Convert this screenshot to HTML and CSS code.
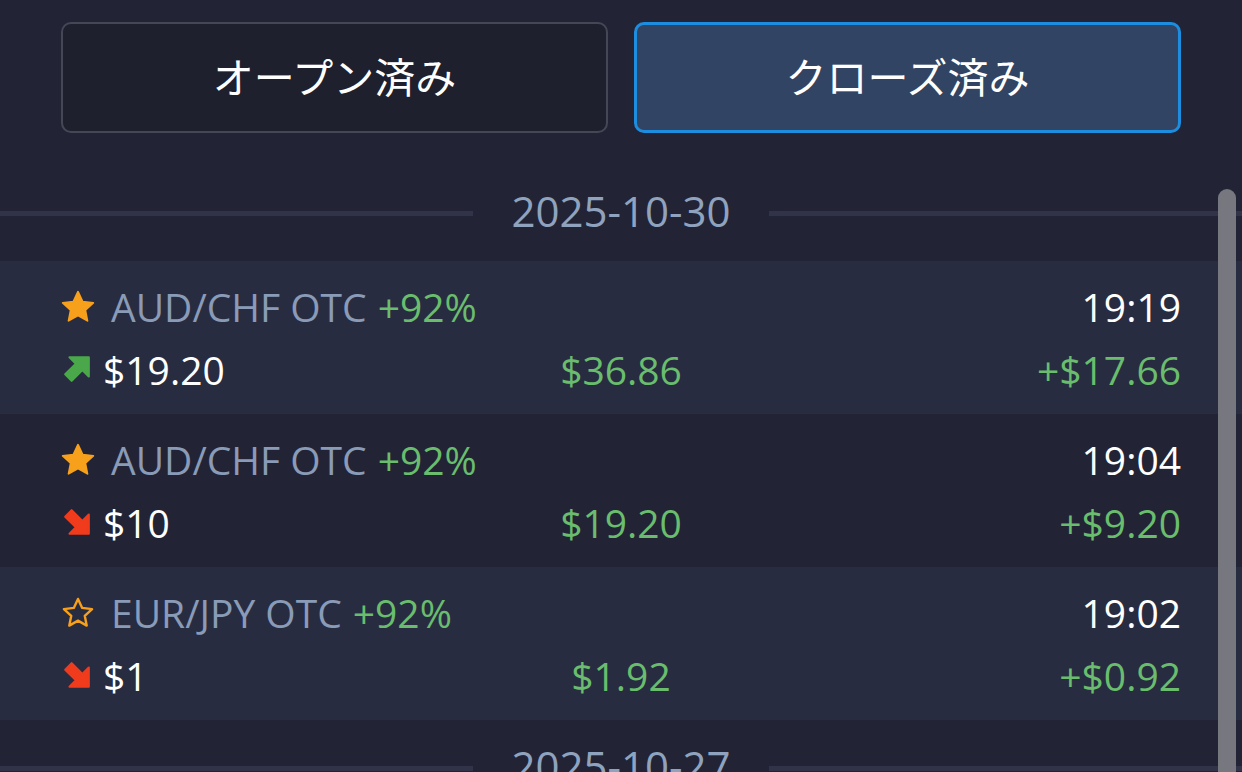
FILE: index.html
```html
<!DOCTYPE html>
<html lang="ja">
<head>
<meta charset="utf-8">
<title>取引履歴</title>
<link rel="stylesheet" href="styles.css">
</head>
<body>
<div class="app">
  <div class="tabs">
    <button class="tab"><span class="tab-label">オープン済み</span></button>
    <button class="tab tab-active"><span class="tab-label">クローズ済み</span></button>
  </div>

  <div class="list">
    <div class="date-sep"><span class="line"></span><span class="date">2025-10-30</span><span class="line"></span></div>

    <div class="trade alt">
      <div class="row-top">
        <div class="asset">
          <svg class="star" viewBox="0 0 24 24"><path d="M12 1.8l3.1 6.6 7.1.8-5.3 4.9 1.4 7.1L12 17.6l-6.3 3.6 1.4-7.1L1.8 9.2l7.1-.8z" fill="#f7a01b" stroke="#f7a01b" stroke-width="1.2" stroke-linejoin="round"/></svg>
          <span class="pair">AUD/CHF OTC</span><span class="pct">+92%</span>
        </div>
        <span class="time">19:19</span>
      </div>
      <div class="row-bottom">
        <div class="amount">
          <svg class="arrow" viewBox="0 0 28 28"><path d="M7 3H25V21L19 15 9 25 3 19 13 9Z" fill="#4aa84a" stroke="#4aa84a" stroke-width="2" stroke-linejoin="round"/></svg>
          <span class="stake">$19.20</span>
        </div>
        <span class="payout">$36.86</span>
        <span class="profit">+$17.66</span>
      </div>
    </div>

    <div class="trade">
      <div class="row-top">
        <div class="asset">
          <svg class="star" viewBox="0 0 24 24"><path d="M12 1.8l3.1 6.6 7.1.8-5.3 4.9 1.4 7.1L12 17.6l-6.3 3.6 1.4-7.1L1.8 9.2l7.1-.8z" fill="#f7a01b" stroke="#f7a01b" stroke-width="1.2" stroke-linejoin="round"/></svg>
          <span class="pair">AUD/CHF OTC</span><span class="pct">+92%</span>
        </div>
        <span class="time">19:04</span>
      </div>
      <div class="row-bottom">
        <div class="amount">
          <svg class="arrow" viewBox="0 0 28 28"><path d="M7 25H25V7L19 13 9 3 3 9 13 19Z" fill="#f03b1d" stroke="#f03b1d" stroke-width="2" stroke-linejoin="round"/></svg>
          <span class="stake">$10</span>
        </div>
        <span class="payout">$19.20</span>
        <span class="profit">+$9.20</span>
      </div>
    </div>

    <div class="trade alt">
      <div class="row-top">
        <div class="asset">
          <svg class="star" viewBox="0 0 24 24"><path d="M12 2.6l2.8 6 6.6.8-4.9 4.5 1.3 6.5L12 17.1l-5.8 3.3 1.3-6.5-4.9-4.5 6.6-.8z" fill="none" stroke="#f7a01b" stroke-width="1.6" stroke-linejoin="round"/></svg>
          <span class="pair">EUR/JPY OTC</span><span class="pct">+92%</span>
        </div>
        <span class="time">19:02</span>
      </div>
      <div class="row-bottom">
        <div class="amount">
          <svg class="arrow" viewBox="0 0 28 28"><path d="M7 25H25V7L19 13 9 3 3 9 13 19Z" fill="#f03b1d" stroke="#f03b1d" stroke-width="2" stroke-linejoin="round"/></svg>
          <span class="stake">$1</span>
        </div>
        <span class="payout">$1.92</span>
        <span class="profit">+$0.92</span>
      </div>
    </div>

    <div class="date-sep"><span class="line"></span><span class="date">2025-10-27</span><span class="line"></span></div>
  </div>

  <div class="scrollbar"></div>
</div>
</body>
</html>
```

FILE: styles.css
```css
* { box-sizing: border-box; }

html, body {
  margin: 0;
  padding: 0;
  width: 1242px;
  height: 772px;
  overflow: hidden;
  background: #222436;
}

body {
  font-family: "Open Sans", "Noto Sans", "Noto Sans CJK JP", sans-serif;
  color: #ffffff;
}

.app {
  position: relative;
  width: 1242px;
  height: 772px;
  overflow: hidden;
}

.tabs {
  display: grid;
  grid-template-columns: 1fr 1fr;
  gap: 26px;
  padding: 22px 61px 0 61px;
}

.tab {
  height: 111px;
  border-radius: 10px;
  border: 2px solid #454756;
  background: #1e202e;
  color: #ffffff;
  font-family: "Noto Sans CJK JP", "Noto Sans", sans-serif;
  font-size: 41px;
  font-weight: 400;
  padding: 0 0 5px 0;
  display: flex;
  align-items: center;
  justify-content: center;
}

.tab-label {
  line-height: 1;
}

.tab-active {
  border: 3px solid #1d8de0;
  background: #314463;
}

.list {
  margin-top: 32px;
}

.date-sep {
  height: 96px;
  display: flex;
  align-items: center;
}

.date-sep .line {
  flex: 1;
  height: 5px;
  background: #313449;
}

.date {
  padding: 0 38px;
  font-size: 42px;
  color: #8fa3bf;
  line-height: 1;
  margin-top: -4px;
}

.trade {
  height: 153px;
  padding: 0 61px;
  display: flex;
  flex-direction: column;
  justify-content: center;
  gap: 10px;
  font-size: 39px;
}

.trade.alt {
  background: #282c41;
}

.row-top {
  display: flex;
  justify-content: space-between;
  align-items: center;
  height: 52px;
}

.asset {
  display: flex;
  align-items: center;
}

.star {
  width: 36px;
  height: 36px;
  margin-right: 15px;
  margin-left: -1px;
}

.pair {
  color: #8a9bb7;
}

.pct {
  color: #69bd6d;
  margin-left: 11px;
}

.time {
  color: #ffffff;
}

.row-bottom {
  display: grid;
  grid-template-columns: 1fr auto 1fr;
  align-items: center;
  height: 52px;
}

.amount {
  display: flex;
  align-items: center;
}

.arrow {
  width: 30px;
  height: 30px;
  margin-left: 1px;
  margin-right: 11px;
}

.stake {
  color: #ffffff;
}

.payout {
  color: #69bd6d;
  text-align: center;
}

.profit {
  color: #69bd6d;
  text-align: right;
}

.scrollbar {
  position: absolute;
  left: 1218px;
  top: 189px;
  width: 18px;
  height: 600px;
  border-radius: 9px 9px 0 0;
  background: #76777f;
}
```
